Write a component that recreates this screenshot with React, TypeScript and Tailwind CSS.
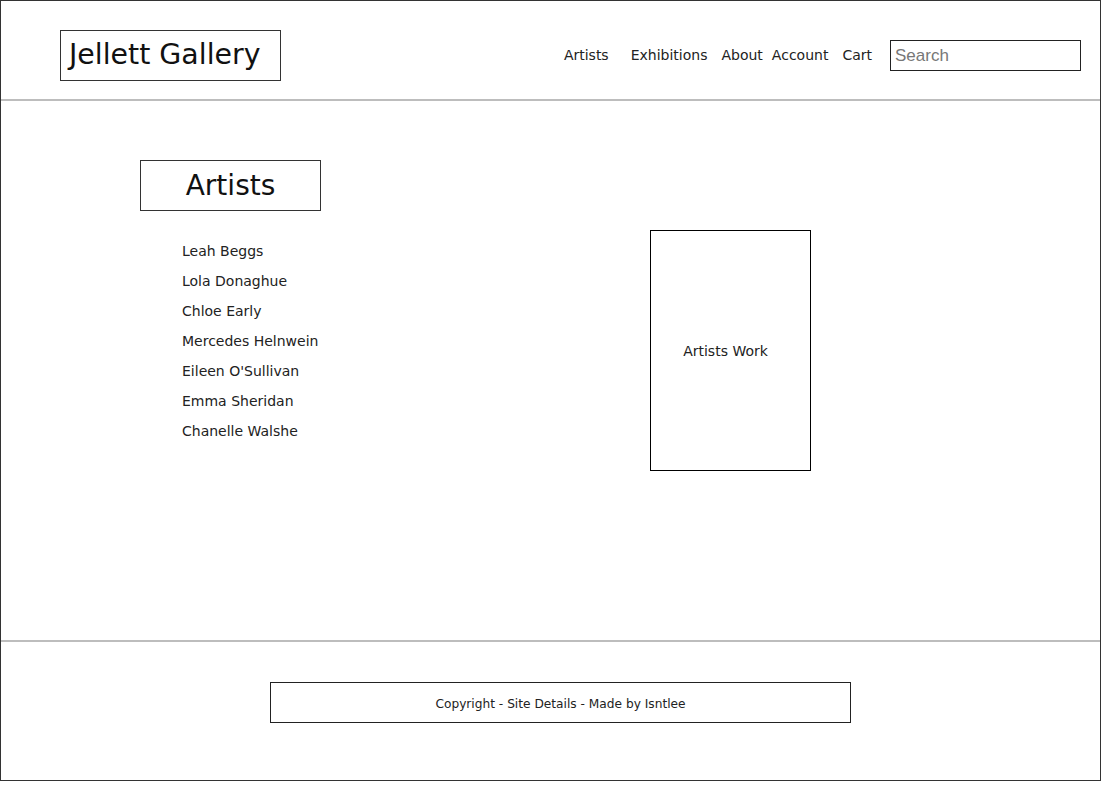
const artists = [
  'Leah Beggs',
  'Lola Donaghue',
  'Chloe Early',
  'Mercedes Helnwein',
  "Eileen O'Sullivan",
  'Emma Sheridan',
  'Chanelle Walshe',
];

const sans = "font-['DejaVu_Sans',sans-serif]";
const arial = "font-['Liberation_Sans',Arial,sans-serif]";

export default function App() {
  return (
    <div className="w-[1101px] h-[789px] bg-white">
      <div className="w-[1101px] h-[781px] border border-[#333] flex flex-col">
        {/* header */}
        <header className="h-[100px] flex items-center border-b-2 border-[#bdbdbd] shrink-0 pt-[11px]">
          <div className="ml-[59px] w-[221px] h-[51px] border border-[#333] flex items-center pl-[8px]">
            <span className={`${sans} text-[28.4px] text-[#111]`}>Jellett Gallery</span>
          </div>
          <nav className={`${sans} flex items-center text-[14px] text-[#222] ml-auto`}>
            <a>Artists</a>
            <a className="ml-[22px]">Exhibitions</a>
            <a className="ml-[14px]">About</a>
            <a className="ml-[9px]">Account</a>
            <a className="ml-[14px]">Cart</a>
          </nav>
          <input
            placeholder="Search"
            className={`${arial} ml-[18px] mr-[19px] w-[191px] h-[31px] border border-[#222] px-[4px] text-[17px] placeholder:text-[#777] outline-none`}
          />
        </header>

        {/* main */}
        <main className="flex-1 flex">
          <div className="w-[649px] pl-[139px] pt-[59px]">
            <div className="w-[181px] h-[51px] border border-[#333] flex items-center justify-center">
              <span className={`${sans} text-[28px] text-[#111]`}>Artists</span>
            </div>
            <ul className={`${sans} ml-[42px] mt-[31px] text-[14px] text-[#222] flex flex-col gap-[11px]`}>
              {artists.map((a) => (
                <li key={a} className="h-[19px] leading-[19px]">{a}</li>
              ))}
            </ul>
          </div>
          <div className="pt-[129px]">
            <div className="w-[161px] h-[241px] border border-black flex items-center justify-center pt-[2px]">
              <span className={`${sans} text-[14px] text-[#222] -ml-[10px]`}>Artists Work</span>
            </div>
          </div>
        </main>

        {/* footer */}
        <footer className="h-[140px] border-t-2 border-[#bdbdbd] shrink-0 pt-[40px] pl-[269px]">
          <div className="w-[581px] h-[41px] border border-[#222] flex items-center justify-center pt-[3px]">
            <span className={`${sans} text-[12.2px] text-[#222]`}>Copyright - Site Details - Made by Isntlee</span>
          </div>
        </footer>
      </div>
    </div>
  );
}
